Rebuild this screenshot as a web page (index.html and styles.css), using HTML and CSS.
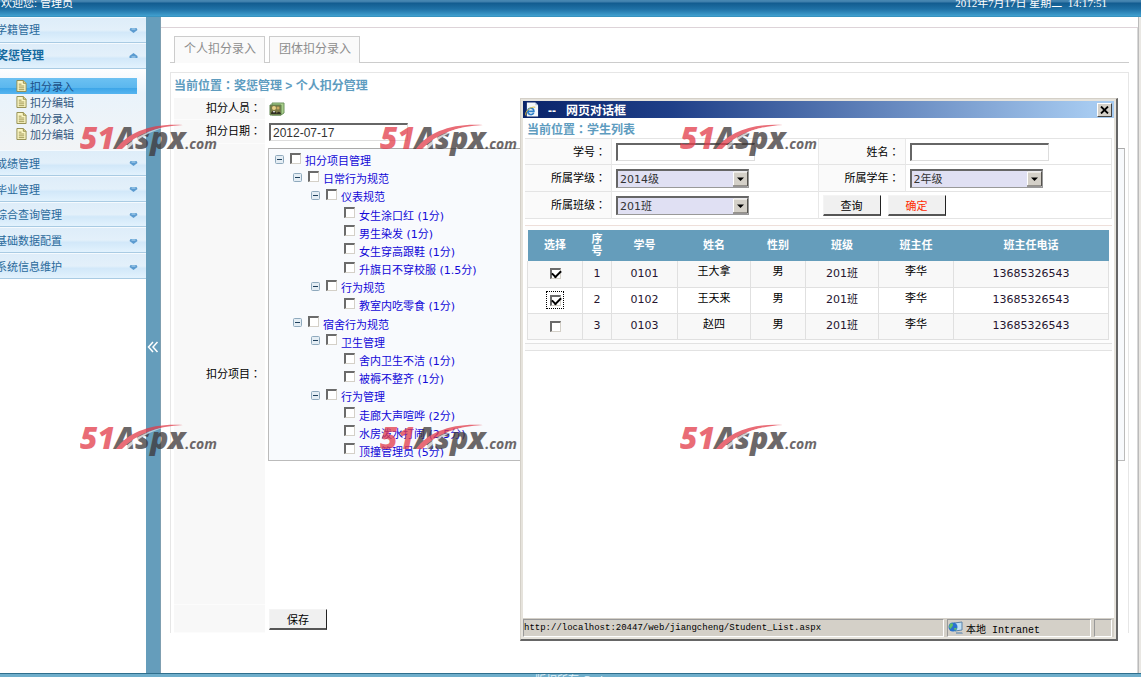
FILE: index.html
```html
<!DOCTYPE html>
<html lang="zh-CN">
<head>
<meta charset="utf-8">
<title>个人扣分管理</title>
<link rel="stylesheet" href="styles.css">
</head>
<body>
<svg class="defs" aria-hidden="true">
  <symbol id="doc" viewBox="0 0 12 13"><path d="M1 .5h7l3 3v9H1z" fill="#fbf6c4" stroke="#8f8a4c"/><path d="M8 .5v3h3" fill="#e6dd92" stroke="#8f8a4c"/><path d="M3 4.500h3M3 6.500h6M3 8.500h6M3 10.500h6" stroke="#9a9250"/></symbol>
  <symbol id="down" viewBox="0 0 8 5"><path d="M1 0h6l1 2-4 3-4-3z" fill="#5b9bd0"/><path d="M2 1h4" stroke="#b9dcf3"/></symbol>
  <symbol id="up" viewBox="0 0 8 5"><path d="M4 0l4 3v2H0V3z" fill="#5b9bd0"/><path d="M2 4h4" stroke="#b9dcf3"/></symbol>
  <symbol id="minus" viewBox="0 0 9 9"><rect x=".5" y=".5" width="8" height="8" rx="1" fill="#e4edf4" stroke="#8fa9bd"/><path d="M2 4.500h5" stroke="#1f3f5c"/></symbol>
  <symbol id="arrow" viewBox="0 0 15 15"><path d="M0 0h15v15H0z" fill="#d4d0c8"/><path d="M.5 14V.5H14" fill="none" stroke="#fff"/><path d="M0 14.500h14.500V0" fill="none" stroke="#55534e"/><path d="M4 6h7L7.500 9.500z" fill="#000"/></symbol>
  <symbol id="swoosh" viewBox="0 0 80 32"><path d="M2 27C14 10 38 1 69 3 44 4 22 12 8 27z" fill="#e23b49"/><path d="M9 27C22 14 38 7 52 5 38 9 25 15 14 27z" fill="#fff" fill-opacity=".7"/></symbol>
</svg>

<header class="top"><span>欢迎您: 管理员</span><time>2012年7月17日 星期二&nbsp; 14:17:51</time></header>

<div class="body">
  <nav class="side">
    <a class="group" href="#"><span>学籍管理</span><svg><use href="#down"/></svg></a>
    <a class="group open" href="#"><span>奖惩管理</span><svg><use href="#up"/></svg></a>
    <div class="sub">
      <a class="on" href="#"><svg><use href="#doc"/></svg>扣分录入</a>
      <a href="#"><svg><use href="#doc"/></svg>扣分编辑</a>
      <a href="#"><svg><use href="#doc"/></svg>加分录入</a>
      <a href="#"><svg><use href="#doc"/></svg>加分编辑</a>
    </div>
    <div class="rest">
      <a class="group" href="#"><span>成绩管理</span><svg><use href="#down"/></svg></a>
      <a class="group" href="#"><span>毕业管理</span><svg><use href="#down"/></svg></a>
      <a class="group" href="#"><span>综合查询管理</span><svg><use href="#down"/></svg></a>
      <a class="group" href="#"><span>基础数据配置</span><svg><use href="#down"/></svg></a>
      <a class="group" href="#"><span>系统信息维护</span><svg><use href="#down"/></svg></a>
    </div>
  </nav>
  <button class="splitter" aria-label="收起菜单"><svg viewBox="0 0 12 12"><path d="M6 1L1.500 6 6 11M10.500 1L6 6l4.500 5" fill="none" stroke="#fff" stroke-width="1.500"/></svg></button>

  <main class="main">
    <div class="frame">
      <div class="tabs"><a href="#">个人扣分录入</a><i></i><a href="#">团体扣分录入</a></div>
      <section class="panel">
        <h1 class="crumb">当前位置<b>：</b>奖惩管理 &gt; 个人扣分管理</h1>
        <form class="form">
          <span class="label">扣分人员<b>：</b></span>
          <div class="cell"><button class="pick" type="button" aria-label="选择人员"><svg viewBox="0 0 16 15"><path d="M3 1h12v10l-3 2H3z" fill="#a9cf8a" stroke="#6f9460"/><path d="M1 3h11v10H1z" fill="#7c7a46" stroke="#5f8450"/><circle cx="5" cy="6" r="2" fill="#e8d08a"/><circle cx="9" cy="6" r="1.500" fill="#c9a860"/><path d="M2 12c0-4 5-4 6 0M8 12c0-3 3-3 4 0" fill="#2f2f22"/><path d="M4 9l1 2 1-2" fill="#fff"/></svg></button></div>
          <label class="label" for="date">扣分日期<b>：</b></label>
          <div class="cell"><input class="text" id="date" value="2012-07-17"></div>
          <span class="label tall">扣分项目<b>：</b></span>
          <div class="treecell">
            <div class="tree">
              <label><svg><use href="#minus"/></svg><input type="checkbox">扣分项目管理</label>
              <label class="l1"><svg><use href="#minus"/></svg><input type="checkbox">日常行为规范</label>
              <label class="l2"><svg><use href="#minus"/></svg><input type="checkbox">仪表规范</label>
              <label class="l3"><input type="checkbox">女生涂口红 (1分)</label>
              <label class="l3"><input type="checkbox">男生染发 (1分)</label>
              <label class="l3"><input type="checkbox">女生穿高跟鞋 (1分)</label>
              <label class="l3"><input type="checkbox">升旗日不穿校服 (1.5分)</label>
              <label class="l2"><svg><use href="#minus"/></svg><input type="checkbox">行为规范</label>
              <label class="l3"><input type="checkbox">教室内吃零食 (1分)</label>
              <label class="l1"><svg><use href="#minus"/></svg><input type="checkbox">宿舍行为规范</label>
              <label class="l2"><svg><use href="#minus"/></svg><input type="checkbox">卫生管理</label>
              <label class="l3"><input type="checkbox">舍内卫生不洁 (1分)</label>
              <label class="l3"><input type="checkbox">被褥不整齐 (1分)</label>
              <label class="l2"><svg><use href="#minus"/></svg><input type="checkbox">行为管理</label>
              <label class="l3"><input type="checkbox">走廊大声喧哗 (2分)</label>
              <label class="l3"><input type="checkbox">水房泼水打闹 (2.5分)</label>
              <label class="l3"><input type="checkbox">顶撞管理员 (5分)</label>
            </div>
          </div>
          <span class="label"></span>
          <div class="cell"><button class="btn" type="button">保存</button></div>
        </form>
      </section>
    </div>
  </main>
  <div class="scroll"></div>
</div>
<footer class="foot"><span>版权所有 Csdn</span></footer>

<div class="dialog" role="dialog" aria-label="网页对话框">
  <div class="title">
    <svg class="ie" viewBox="0 0 15 15"><path d="M2 0h9l3 3v12H2z" fill="#f4f7fb"/><path d="M11 0v3h3" fill="#b9c8dc"/><path d="M3 9.500h6.500c0-4.500-6.500-4.500-6.500 0s5.500 4 6.300 1.500" fill="none" stroke="#2d7fc9" stroke-width="1.800"/><path d="M1 14C-1 10 6 4 11 5" fill="none" stroke="#d9b93c"/></svg>
    <span>--&nbsp; &nbsp;网页对话框</span>
    <button class="close" aria-label="关闭"><svg viewBox="0 0 9 8"><path d="M1 .5l7 7M8 .5l-7 7" stroke="#000" stroke-width="1.800"/></svg></button>
  </div>
  <div class="content">
    <h2 class="crumb">当前位置<b>：</b>学生列表</h2>
    <form class="query">
      <label class="ql" for="no">学号<b>：</b></label><div class="qc"><input class="text" id="no"></div>
      <label class="ql" for="nm">姓名<b>：</b></label><div class="qc"><input class="text" id="nm"></div>
      <label class="ql" for="gr">所属学级<b>：</b></label><div class="qc"><span class="sel"><select id="gr"><option>2014级</option></select><svg><use href="#arrow"/></svg></span></div>
      <label class="ql" for="yr">所属学年<b>：</b></label><div class="qc"><span class="sel"><select id="yr"><option>2年级</option></select><svg><use href="#arrow"/></svg></span></div>
      <label class="ql" for="cl">所属班级<b>：</b></label><div class="qc"><span class="sel"><select id="cl"><option>201班</option></select><svg><use href="#arrow"/></svg></span></div>
      <div class="acts"><button class="btn" type="button">查询</button><button class="btn red" type="button">确定</button></div>
    </form>
    <div class="result">
      <table>
        <colgroup><col class="w55"><col class="w29"><col class="w66"><col class="w73"><col class="w55"><col class="w73"><col class="w75"><col></colgroup>
        <thead><tr><th>选择</th><th>序<br>号</th><th>学号</th><th>姓名</th><th>性别</th><th>班级</th><th>班主任</th><th>班主任电话</th></tr></thead>
        <tbody>
          <tr><td><span class="tick"><input type="checkbox" checked aria-label="王大拿"></span></td><td>1</td><td>0101</td><td>王大拿</td><td>男</td><td>201班</td><td>李华</td><td>13685326543</td></tr>
          <tr><td><span class="tick focus"><input type="checkbox" checked aria-label="王天来"></span></td><td>2</td><td>0102</td><td>王天来</td><td>男</td><td>201班</td><td>李华</td><td>13685326543</td></tr>
          <tr><td><span class="tick"><input type="checkbox" aria-label="赵四"></span></td><td>3</td><td>0103</td><td>赵四</td><td>男</td><td>201班</td><td>李华</td><td>13685326543</td></tr>
        </tbody>
      </table>
    </div>
    <div class="tail"></div>
  </div>
  <div class="status">
    <span class="pane url">http://localhost:20447/web/jiangcheng/Student_List.aspx</span>
    <span class="pane zone"><svg viewBox="0 0 15 14"><path d="M6 2l8-1v8l-7 1z" fill="#bfe0f5" stroke="#5c83a8"/><path d="M8 11h6l1 2H8z" fill="#8fa6bb"/><circle cx="5" cy="6" r="4.500" fill="#2a72cf"/><path d="M2 3c3-2 4 1 2 3S3 9 1 6zM6 7l3 0-2 3z" fill="#5fc06a"/></svg>本地 Intranet</span>
    <span class="pane grip"></span>
  </div>
</div>

<div class="mark m1"><em>51</em><strong>Aspx</strong><small>.com</small><svg><use href="#swoosh"/></svg></div>
<div class="mark m2"><em>51</em><strong>Aspx</strong><small>.com</small><svg><use href="#swoosh"/></svg></div>
<div class="mark m3"><em>51</em><strong>Aspx</strong><small>.com</small><svg><use href="#swoosh"/></svg></div>
<div class="mark m4"><em>51</em><strong>Aspx</strong><small>.com</small><svg><use href="#swoosh"/></svg></div>
<div class="mark m5"><em>51</em><strong>Aspx</strong><small>.com</small><svg><use href="#swoosh"/></svg></div>
<div class="mark m6"><em>51</em><strong>Aspx</strong><small>.com</small><svg><use href="#swoosh"/></svg></div>
</body>
</html>
```
FILE: styles.css
```css
* { box-sizing: border-box; }
body { margin: 0; height: 100vh; display: flex; flex-direction: column; overflow: hidden; position: relative; background: #fff; color: #000; font: 11px "DejaVu Sans", "Noto Sans CJK SC", sans-serif; }
button, input, select { font: inherit; margin: 0; padding: 0; color: inherit; }
a { color: inherit; text-decoration: none; }
svg { display: block; flex: none; }
.defs { position: absolute; width: 0; height: 0; }
b { font-family: "Noto Sans CJK TC", sans-serif; font-weight: inherit; font-feature-settings: "locl" 0; }

.top { flex: none; height: 17px; overflow: hidden; display: flex; justify-content: space-between; padding: 0 34px 0 1px; line-height: 6px; color: #fff; background: linear-gradient(#4a89b3 0, #3d7dab 2px, #125b8f 3px, #1f70a5 9px, #41a0cf 16px, #2f86b0 17px); }
.top span { font-family: "Liberation Sans", "Noto Sans CJK SC", sans-serif; }
.top time { font-family: "Liberation Serif", "Noto Sans CJK SC", serif; }
.body { flex: 1; min-height: 0; display: flex; }

.side { flex: none; width: 146px; overflow: hidden; color: #2a6a9c; }
.group { display: flex; align-items: center; justify-content: space-between; height: 26px; padding: 0 8px 2px 0; border-bottom: 1px solid #a9cbe3; border-top: 1px solid #f5fafe; background: linear-gradient(#deedf9, #e3f0fa 50%, #d2e8f9 60%, #e2f2fd); }
.group span { margin-left: -4px; }
.group svg { width: 9px; height: 5px; margin-top: 2px; }
.open { padding-bottom: 4px; font-weight: bold; font-size: 12px; color: #156a9f; }
.sub { height: 81px; padding-top: 9px; background: linear-gradient(#fdfeff, #e9f3fb 30%, #f2f4f6); color: #33587f; }
.sub a { display: flex; align-items: center; gap: 3px; height: 16px; margin-right: 9px; padding-left: 16px; }
.sub svg { width: 11px; height: 12px; }
.sub .on { background: linear-gradient(#6cc1f2, #5bb7ee 60%, #3ea6e8 65%, #55b4f0); color: #1d4f86; }
.rest { height: 129px; display: grid; grid-auto-rows: 1fr; }
.rest .group { height: auto; padding-bottom: 0; }

.splitter { flex: none; width: 15px; padding-top: 4px; border: 0; border-right: 1px solid #7f9fb1; background: #659dbb; display: grid; place-items: center; }
.splitter svg { width: 12px; height: 12px; }

.main { flex: 1; min-width: 0; padding-top: 10px; }
.frame { height: 100%; padding: 8px 8px 0 9px; border-top: 1px solid #ddd3d8; border-right: 1px solid #d8d8d8; }
.scroll { flex: none; width: 3px; background: #e9e7e3; border-left: 1px solid #bbb; }
.tabs { display: flex; height: 27px; }
.tabs::before, .tabs i, .tabs::after { content: ""; width: 4px; border-bottom: 1px solid #ccc; }
.tabs::after { flex: 1; }
.tabs a { padding: 0 8px 0 9px; line-height: 25px; font-size: 12px; color: #8d8d8d; background: #fafafa; border: 1px solid #ccc; border-bottom: 0; }
.panel { margin-top: 9px; padding-left: 3px; border: 1px solid #e6e6e6; border-bottom: 0; }
.crumb { margin: 0; font-size: 12px; line-height: 24px; font-weight: bold; color: #5e9cbf; font-family: "Liberation Sans", "Noto Sans CJK SC", sans-serif; }
.form { display: grid; grid-template-columns: 91px minmax(0, 1fr); column-gap: 3px; grid-template-rows: 22px 24px 461px 28px; }
.label { display: flex; align-items: center; justify-content: flex-end; padding: 0 4px 3px 0; background: #f8f8f8; border-bottom: 1px solid #fcfcfc; }
.cell { display: flex; align-items: center; padding-left: 1px; }
.pick { border: 0; background: none; }
.pick svg { width: 16px; height: 15px; }
.text { width: 139px; height: 18px; padding: 0 2px; border: 1px solid #ddd; border-top: 2px solid #666; border-left: 2px solid #666; background: #fff; font-family: "Liberation Sans", sans-serif; font-size: 12px; color: #333; }
.treecell { padding: 4px 3px 0 0; }
.tree { display: grid; grid-auto-rows: 1fr; height: 313px; padding: 2px 0 0 6px; border: 1px solid #bbb; border-top-color: #aaa; background: #f8fafd; color: #1208d8; }
.tree label { display: flex; align-items: center; }
.tree svg { width: 9px; height: 9px; margin: 0 6px 2px 0; }
.l1 { padding-left: 18px; }
.l2 { padding-left: 36px; }
.l3 { padding-left: 69px; }
input[type="checkbox"] { appearance: none; flex: none; width: 11px; height: 11px; border: 1px solid #d4d0c8; border-top: 2px solid #6b6b6b; border-left: 2px solid #6b6b6b; background: #fff; }
.tree input { margin: 0 4px 4px 0; }
.btn { width: 58px; height: 21px; border: 1px solid #f4f4f4; border-right: 1px solid #222; border-bottom: 2px solid #555; background: #f0f0f0; }
.red { color: #ff2a00; }

.foot { flex: none; height: 4px; overflow: hidden; padding-left: 535px; border-top: 1px solid #2f6f8d; background: #6faecb; color: #e6f3f9; line-height: 14px; }

.dialog { position: absolute; left: 520px; right: 23px; top: 98px; bottom: 36px; display: flex; flex-direction: column; padding: 2px; border: 1px solid #d4d0c8; border-right: 2px solid #666; border-bottom: 2px solid #666; background: #e6e3dc; }
.title { flex: none; display: flex; align-items: center; height: 17px; padding: 0 2px; color: #fff; font-size: 12px; font-weight: bold; font-family: "Liberation Sans", "Noto Sans CJK SC", sans-serif; background: linear-gradient(90deg, #0a246a, #1f3f88 25%, #a6caf0 96%); }
.title span { flex: 1; padding-left: 9px; }
.ie { width: 14px; height: 15px; }
.close { width: 15px; height: 14px; border: 1px solid #fff; border-right-color: #444; border-bottom-color: #444; background: #d4d0c8; display: grid; place-items: center; }
.close svg { width: 9px; height: 8px; }
.content { flex: 1; min-height: 0; padding: 0 2px; background: #fff; }
.content .crumb { height: 20px; line-height: 21px; padding-left: 2px; }
.query { display: grid; grid-template-columns: 87px minmax(0, 207fr) 87px minmax(0, 207fr); grid-template-rows: 26px 27px 27px; border-top: 1px solid #e4e4e4; }
.ql, .qc, .acts { display: flex; align-items: center; border-bottom: 1px solid #e4e4e4; border-right: 1px solid #e8e8e8; }
.ql { justify-content: flex-end; padding: 0 5px 2px 0; background: #fafafa; }
.qc { padding-left: 4px; }
.acts { grid-column: span 2; gap: 7px; padding-left: 4px; }
.sel { position: relative; width: 133px; height: 19px; }
.sel select { appearance: none; width: 100%; height: 100%; padding: 1px 0 0 2px; border: 1px solid #999; border-top: 2px solid #666; border-left: 2px solid #666; border-radius: 0; background: #e0e0f3; color: #333; }
.sel svg { position: absolute; right: 1px; top: 2px; width: 15px; height: 16px; pointer-events: none; }
.result { margin-top: 6px; padding: 4px 3px 3px 2px; border-top: 1px solid #eedfda; border-bottom: 1px solid #e2e2e2; background: #fdfdfd; }
.tail { height: 7px; background: #fafafa; border-bottom: 1px solid #e2e2e2; }
table { width: 100%; table-layout: fixed; border-collapse: collapse; text-align: center; }
th { height: 31px; padding: 0; color: #fff; background: #659dbb; line-height: 12px; }
td { height: 26px; padding: 0; border: 1px solid #e0e0e0; border-top: 0; color: #25152f; line-height: 14px; }
tbody tr:nth-child(odd) { background: #f8f8f8; }
tbody tr:nth-child(even) { background: #fff; }
td:nth-child(4), td:nth-child(5), td:nth-child(7) { padding-bottom: 3px; color: #000; }
.w29 { width: 29px; } .w55 { width: 55px; } .w66 { width: 66px; } .w73 { width: 73px; } .w75 { width: 75px; }
.tick { display: inline-grid; place-items: center; width: 18px; height: 18px; vertical-align: middle; }
.focus { border: 1px dotted #000; }
.tick input { display: grid; place-items: center; }
.tick input:checked::after { content: ""; width: 7px; height: 4px; margin-top: -2px; border-left: 2px solid #000; border-bottom: 2px solid #000; transform: rotate(-45deg); }
.status { flex: none; display: flex; gap: 3px; height: 19px; padding-top: 1px; padding-right: 2px; background: #d4d0c8; font: 9px "Liberation Mono", "Noto Sans CJK SC", monospace; }
.pane { display: flex; align-items: center; gap: 3px; border: 1px solid #999; border-right-color: #fff; border-bottom-color: #fff; white-space: nowrap; overflow: hidden; }
.url { flex: 1; }
.zone { width: 144px; font-size: 10px; }
.zone svg { width: 15px; height: 14px; }
.grip { width: 18px; }

.mark { position: absolute; display: flex; align-items: baseline; width: 140px; height: 32px; line-height: 32px; opacity: .75; pointer-events: none; font-family: "Open Sans", sans-serif; font-style: italic; font-weight: 800; font-size: 30px; color: #3c3637; }
.mark em { color: #e23b49; }
.mark small { font-size: 14px; font-weight: 700; }
.mark svg { position: absolute; left: 34px; top: 0; width: 80px; height: 32px; }
.m1, .m4 { left: 80px; } .m2, .m5 { left: 380px; } .m3, .m6 { left: 680px; }
.m1, .m2, .m3 { top: 122px; } .m4, .m5, .m6 { top: 422px; }
```
